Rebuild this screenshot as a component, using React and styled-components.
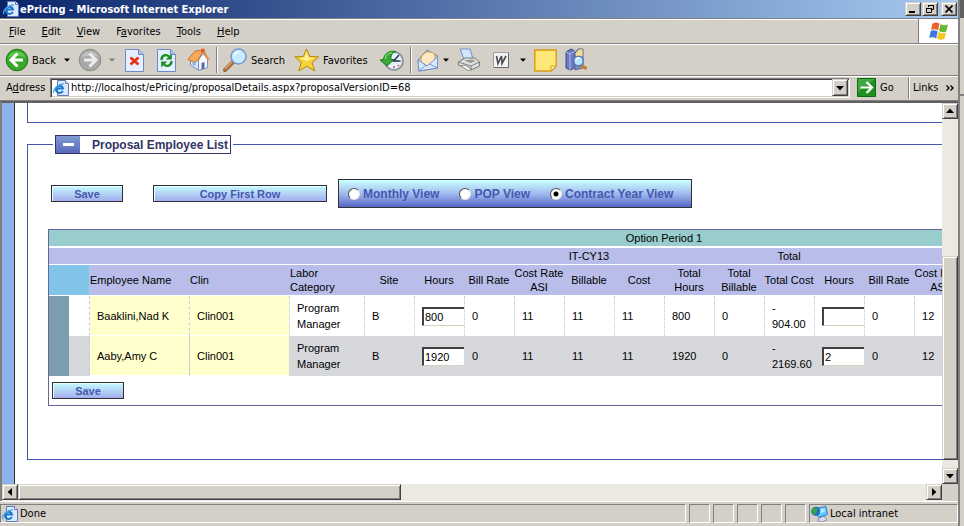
import React, { useState } from 'react'
import styled, { createGlobalStyle, css } from 'styled-components'

const GlobalStyle = createGlobalStyle`
    * { box-sizing: border-box; }
    body {
        margin: 0;
        background: #d4d0c8;
        font-family: "DejaVu Sans Condensed", "Open Sans", sans-serif;
        font-size: 11px;
        color: #000;
    }
    button, input { font: inherit; color: inherit; }
`

const raised = css`
    border: 1px solid;
    border-color: #d4d0c8 #404040 #404040 #d4d0c8;
    box-shadow: inset 1px 1px 0 #fff, inset -1px -1px 0 #808080;
    background: #d4d0c8;
`

/* ---------- window ---------- */

const Desktop = styled.div`
    display: flex;
    height: 100vh;
    overflow: hidden;
`
const Window = styled.div`
    flex: 1;
    min-width: 0;
    display: flex;
    flex-direction: column;
`
const Edge = styled.div`
    width: 6px;
    border-left: 2px solid #808080;
    background: linear-gradient(#606060 18px, #d4d0c8 18px, #d4d0c8 94px, #808080 94px, #808080 96px, #d4d0c8 96px);
`
const TitleBar = styled.header`
    height: 18px;
    padding: 0 1px 0 3px;
    display: flex;
    align-items: center;
    gap: 1px;
    background: linear-gradient(to right, #0a246a, #a6caf0);
    color: #fff;
`
const Title = styled.h1`
    flex: 1;
    margin: 0;
    font-size: 11px;
    font-weight: bold;
    white-space: nowrap;
`
const CaptionButton = styled.button`
    ${raised}
    width: 16px;
    height: 14px;
    padding: 0;
    display: flex;
    justify-content: center;
    align-items: center;
    margin-left: ${p => (p.$apart ? '2px' : '0')};
`
const MenuRow = styled.div`
    height: 26px;
    display: flex;
    border-top: 1px solid #808080;
    border-bottom: 1px solid #808080;
    box-shadow: inset 0 1px 0 #fff;
`
const Menu = styled.nav`
    flex: 1;
    display: flex;
    align-items: center;
    gap: 16px;
    padding-left: 9px;
    box-shadow: inset 0 1px 0 #fff;
`
const MenuItem = styled.button`
    border: 0;
    padding: 0;
    background: none;
`
const Flag = styled.div`
    width: 40px;
    border-left: 1px solid #808080;
    background: #fff;
    display: flex;
    align-items: center;
    justify-content: center;
`
const ToolRow = styled.div`
    height: 32px;
    display: flex;
    align-items: center;
    padding-left: 5px;
    border-top: 1px solid #fff;
    border-bottom: 1px solid #808080;
`
const Tool = styled.button`
    width: ${p => p.$width}px;
    height: 26px;
    border: 0;
    padding: 0;
    background: none;
    display: flex;
    align-items: center;
    gap: 3px;
    white-space: nowrap;
    svg { flex: none; }
`
const Divider = styled.span`
    width: 2px;
    height: 26px;
    margin-right: 5px;
    border-left: 1px solid #808080;
    border-right: 1px solid #fff;
`
const AddressRow = styled.div`
    height: 25px;
    padding: 1px 2px 3px 6px;
    display: flex;
    align-items: center;
    border-top: 1px solid #fff;
    border-bottom: 1px solid #808080;
`
const AddressLabel = styled.label`
    width: 44px;
    white-space: nowrap;
`
const Combo = styled.div`
    flex: 1;
    height: 20px;
    display: flex;
    align-items: center;
    padding: 0 0 0 2px;
    border: 1px solid;
    border-color: #808080 #fff #fff #808080;
    box-shadow: inset 1px 1px 0 #404040, inset -1px -1px 0 #d4d0c8;
    background: #fff;
`
const AddressInput = styled.input`
    flex: 1;
    min-width: 0;
    border: 0;
    outline: 0;
    padding: 0 0 0 2px;
    background: none;
`
const DropButton = styled.button`
    ${raised}
    width: 16px;
    height: 17px;
    padding: 0;
    margin-right: 1px;
    display: flex;
    align-items: center;
    justify-content: center;
`
const Go = styled(Tool)`
    height: 20px;
    margin-left: 7px;
    gap: 4px;
`
const Links = styled.button`
    width: 48px;
    height: 22px;
    padding: 0 2px 0 4px;
    border: 0;
    border-left: 1px solid #808080;
    box-shadow: inset 1px 0 0 #fff;
    background: none;
    display: flex;
    align-items: center;
    justify-content: space-between;
`

/* ---------- scrolling area ---------- */

const View = styled.div`
    flex: 1;
    min-height: 0;
    display: grid;
    grid-template: minmax(0, 1fr) 17px / minmax(0, 1fr) 16px;
    border: solid #404040;
    border-width: 2px 0 0 2px;
    border-color: #606060 #404040 #404040 #808080;
`
const Page = styled.main`
    overflow: hidden;
    display: flex;
    background: #fff;
    font-family: "Liberation Sans", Arial, sans-serif;
`
const Side = styled.div`
    width: 13px;
    flex: none;
    background: #8cb4e8;
    border-right: 1px solid #303030;
`
const Content = styled.div`
    flex: 1;
    min-width: 0;
    margin-left: 12px;
`
const PrevSection = styled.div`
    height: 20px;
    border: solid #4058b0;
    border-width: 0 0 1px 1px;
`
const Section = styled.fieldset`
    margin: 12px 0 0;
    padding: 25px 0 53px 20px;
    min-width: 0;
    border: solid #4058b0;
    border-width: 1px 0 1px 1px;
`
const Legend = styled.legend`
    margin-left: 5px;
    padding: 0 2px;
`
const LegendBox = styled.div`
    height: 19px;
    display: flex;
    align-items: center;
    border: 1px solid #333366;
    font-size: 12px;
    font-weight: bold;
    color: #333366;
    padding-right: 2px;
`
const Collapse = styled.button`
    width: 24px;
    height: 17px;
    margin-right: 12px;
    padding: 0;
    border: 0;
    background: linear-gradient(#7f9cd4, #5868b8);
    display: flex;
    justify-content: center;
    align-items: center;
    &::before {
        content: '';
        width: 11px;
        height: 3px;
        background: #fff;
    }
`
const Actions = styled.div`
    display: flex;
    align-items: center;
    padding-left: 3px;
    margin-bottom: 21px;
`
const ActionButton = styled.button`
    width: ${p => (p.$wide ? '174px' : '72px')};
    height: 17px;
    padding: 0;
    border: 1px solid #303030;
    box-shadow: inset 1px 1px 0 #e8ffff;
    background: linear-gradient(#c4fbff, #a4acec);
    color: #4458b0;
    font-weight: bold;
    line-height: 14px;
    margin-right: ${p => (p.$wide ? '11px' : '30px')};
`
const ViewPicker = styled.div`
    width: 354px;
    height: 29px;
    display: flex;
    align-items: center;
    gap: 20px;
    padding-left: 9px;
    border: 1px solid #303030;
    background: linear-gradient(#ccffff, #9cb4ec 55%, #5464c4);
`
const ViewOption = styled.label`
    display: flex;
    align-items: center;
    gap: 3px;
    font-size: 12px;
    font-weight: bold;
    color: #4458b0;
    white-space: nowrap;
`
const Radio = styled.input`
    appearance: none;
    width: 12px;
    height: 12px;
    margin: 0;
    border: 1px solid;
    border-color: #505050 #e4e4e4 #e4e4e4 #505050;
    border-radius: 50%;
    background: #fff;
    &:checked { background: radial-gradient(circle, #000 2px, #fff 3px); }
`

/* ---------- grid ---------- */

const GridBox = styled.div`
    width: 1200px;
    border: 1px solid #666699;
    padding-bottom: 6px;
`
const Grid = styled.table`
    table-layout: fixed;
    width: 915px;
    border-collapse: separate;
    border-spacing: 0;
    margin-bottom: 6px;
`
const Band = styled.tr`
    height: ${p => p.$height}px;
    background: ${p => p.$color};
`
const Th = styled.th`
    padding: 0;
    border-bottom: ${p => p.$line || 1}px solid #fff;
    font-weight: normal;
    line-height: 14px;
    text-align: ${p => (p.$left ? 'left' : 'center')};
    padding-left: ${p => (p.$left ? '1px' : '0')};
    background: ${p => p.$bg || 'transparent'};
    white-space: ${p => (p.$wrap ? 'normal' : 'nowrap')};
`
const Row = styled.tr`
    height: 40px;
    background: ${p => (p.$alt ? '#d6d8dc' : '#fff')};
    --line: ${p => (p.$alt ? '#d6d8dc' : '#c0c0c8')};
`
const Td = styled.td`
    padding: 0 7px;
    line-height: 16px;
    border-left: 1px ${p => (p.$key ? 'dashed #c0c8f0' : 'dotted var(--line)')};
    border-bottom: ${p => (p.$key ? '1px solid #fff' : '0')};
    background: ${p => (p.$key ? '#ffffcc' : 'transparent')};
    background-clip: padding-box;
`
const Marker = styled.td`
    padding: 0;
    background: ${p => (p.$dark ? '#7c9cb0' : 'transparent')};
`
const HoursInput = styled.input`
    display: block;
    width: 42px;
    height: 19px;
    padding: 0 0 0 1px;
    border: solid;
    border-width: 2px 0 1px 2px;
    border-color: #404040 #404040 #d8d0b8 #404040;
    border-radius: 0;
    background: #fff;
`
const Foot = styled.div`
    padding-left: 3px;
    display: flex;
`

/* ---------- scroll bars and status ---------- */

const Bar = styled.div`
    display: flex;
    flex-direction: ${p => (p.$vertical ? 'column' : 'row')};
    background: #ece9e2;
`
const ArrowButton = styled.button`
    ${raised}
    width: 16px;
    height: 16px;
    flex: none;
    padding: 0;
    display: flex;
    align-items: center;
    justify-content: center;
`
const Thumb = styled.div`
    ${raised}
    flex: ${p => p.$size};
    height: ${p => (p.$across ? '16px' : 'auto')};
`
const Track = styled.div`
    flex: ${p => p.$size};
`
const StatusBar = styled.footer`
    height: 25px;
    padding: 2px 0 3px;
    display: flex;
    gap: 3px;
    border-top: 1px solid #fff;
`
const Pane = styled.div`
    width: ${p => (p.$width ? p.$width + 'px' : 'auto')};
    flex: ${p => (p.$width ? 'none' : 1)};
    display: flex;
    align-items: center;
    gap: 2px;
    padding-left: 1px;
    border: 1px solid;
    border-color: #808080 #fff #fff #808080;
`

/* ---------- icons ---------- */

const Arrow = ({ dir = 'down', color = '#000', size = 6 }) => {
    const turn = { down: 0, left: 90, up: 180, right: 270 }[dir]
    return (
        <svg width={size} height={size} viewBox="0 0 6 6">
            <path d="M0 1.5h6L3 4.8z" fill={color} transform={`rotate(${turn} 3 3)`} />
        </svg>
    )
}

const PageIcon = () => (
    <svg width="16" height="16" viewBox="0 0 16 16">
        <path d="M4.500 .5h8l3 3v12h-11z" fill="#dce8fc" stroke="#6078b8" />
        <path d="M12.500 .5v3h3" fill="#fff" stroke="#6078b8" />
        <path d="M9.800 10.800A3.600 3.600 0 1 1 10 8.500H3" fill="none" stroke="#1878d0" strokeWidth="2" />
        <path d="M.8 13C-.8 10 5 3.500 11 3.800" fill="none" stroke="#48a8f0" strokeWidth="1.300" />
    </svg>
)

const BackIcon = () => (
    <svg width="24" height="24" viewBox="0 0 24 24">
        <circle cx="12" cy="12" r="10.800" fill="#38a828" stroke="#187818" />
        <path d="M3 10a9.500 9.500 0 0 1 18 0c-5-3-12-3-18 0z" fill="#78d060" opacity=".7" />
        <path d="M12.500 5.500L6 12l6.500 6.500M6.500 12H18" fill="none" stroke="#fff" strokeWidth="3" />
    </svg>
)

const ForwardIcon = () => (
    <svg width="24" height="24" viewBox="0 0 24 24">
        <circle cx="12" cy="12" r="10.800" fill="#a8a8a8" stroke="#888" />
        <path d="M3 10a9.500 9.500 0 0 1 18 0c-5-3-12-3-18 0z" fill="#c0c0c0" />
        <path d="M11.500 5.500L18 12l-6.500 6.500M17.500 12H6" fill="none" stroke="#ececec" strokeWidth="3" />
    </svg>
)

const Sheet = () => (
    <>
        <path d="M.5 .5h13l5 5v17H.5z" fill="#e4f0ff" stroke="#7088c8" />
        <path d="M13.500 .5v5h5" fill="#a8c4f0" stroke="#7088c8" />
    </>
)

const StopIcon = () => (
    <svg width="19" height="23" viewBox="0 0 19 23">
        <Sheet />
        <path d="M5.500 8.500l8 7M13.500 8.500l-8 7" stroke="#e83010" strokeWidth="2.800" />
    </svg>
)

const RefreshIcon = () => (
    <svg width="19" height="23" viewBox="0 0 19 23">
        <Sheet />
        <path d="M4.500 11c0-5 5-6 7.500-3.500M14.500 12c0 5-5 6-7.500 3.500" fill="none" stroke="#18901c" strokeWidth="2.400" />
        <path d="M14.800 4.500v6h-6zM4.200 18.500v-6h6z" fill="#18901c" />
    </svg>
)

const HomeIcon = () => (
    <svg width="23" height="24" viewBox="0 0 23 24">
        <path d="M3.500 11L9 5l2.500 6.500V22l-8-5z" fill="#dce6fc" stroke="#7890c8" />
        <path d="M11.500 12L16 5.500l4.500 5.500v8.500l-9 3z" fill="#f8f8ff" stroke="#7890c8" />
        <path d="M.8 11.500L8 3l9-1-6.500 10.500-2.500 2z" fill="#f4a858" stroke="#c87830" />
        <path d="M17 2l5.500 9.500-2 .5-4-6.500z" fill="#e89040" />
        <path d="M14 .8h3.500V5L14 4z" fill="#e85828" />
        <path d="M14.500 15l3-1v6.500l-3 1z" fill="#5868a0" />
        <path d="M5.500 13.500l3 1v3.500l-3-1.500z" fill="#80b0e8" />
    </svg>
)

const SearchIcon = () => (
    <svg width="25" height="24" viewBox="0 0 25 24">
        <path d="M10 14l-8 8" stroke="#a06838" strokeWidth="4" strokeLinecap="round" />
        <path d="M9 14l-7 7" stroke="#e0a868" strokeWidth="1.500" />
        <circle cx="15.500" cy="8.500" r="7.500" fill="#c8ecff" stroke="#7898d0" strokeWidth="1.600" />
        <path d="M10.500 8c.5-4 4-5 7-4-3 0-4 2-7 4z" fill="#fff" />
    </svg>
)

const StarIcon = () => (
    <svg width="26" height="24" viewBox="0 0 26 24">
        <path d="M12.500 1l3.300 7.500 9 .3-6.800 5.700 2.800 8.500-8-4.800-8 4.800 2.500-8.500L.8 8.800l8.500-.3z" fill="#f8d038" stroke="#b88810" />
        <path d="M12.500 3.500l2 6 6 .5-8 3-7-3 5-.5z" fill="#fff498" />
    </svg>
)

const HistoryIcon = () => (
    <svg width="25" height="24" viewBox="0 0 25 24">
        <circle cx="14" cy="13" r="9" fill="#e4f2fc" stroke="#8898a0" strokeWidth="2" />
        <path d="M21 13h-2M14 20v-2M19 18l-1-1" stroke="#e05040" strokeWidth="1.500" />
        <path d="M19 7l-5.500 6h6" fill="none" stroke="#203050" strokeWidth="1.400" />
        <path d="M0 12l3.500-.5C4 6 9 2 16 3.500 12 4.500 10.500 8 11 11.500h3L7 18z" fill="#38a838" stroke="#187820" />
        <path d="M5 11c.5-4 3-6 7-6.500" fill="none" stroke="#90e080" strokeWidth="1.200" />
    </svg>
)

const MailIcon = () => (
    <svg width="22" height="24" viewBox="0 0 22 24">
        <path d="M1 12L10 2l10.500 6v12L2 23z" fill="#b8d0f8" stroke="#6880c0" />
        <path d="M4 10c2-7 11-8 14-3v6l-8 5-6-4z" fill="#ffe8c0" stroke="#d09848" />
        <path d="M1 12l9 6 10.500-9v11L2 23z" fill="#d4eaff" stroke="#7890c8" />
        <path d="M2 23l7-6M20.500 20l-8-4" stroke="#7890c8" fill="none" />
    </svg>
)

const PrintIcon = () => (
    <svg width="24" height="24" viewBox="0 0 24 24">
        <path d="M3 1h10l3 10H7z" fill="#d0e8ff" stroke="#7090c8" />
        <path d="M1.500 14L8 10h10l4.500 4v4l-8.500 4-12.500-5z" fill="#e0e0e0" stroke="#787878" />
        <path d="M1.500 14L14 18l8.500-4M14 18v4" fill="none" stroke="#808080" />
        <path d="M7 12.500l8-1 3.500 1.500-5 2z" fill="#989898" />
        <path d="M4 18l7 4.500 4-1.500-8-4z" fill="#fff" stroke="#888" />
    </svg>
)

const WordIcon = () => (
    <svg width="16" height="16" viewBox="0 0 16 16">
        <path d="M.5 .5h15v15H.5z" fill="#f4f4f4" stroke="#a0a0a0" />
        <path d="M15.500 1v14.500H1" fill="none" stroke="#686868" />
        <path d="M3.500 4l1.500 7.500L8.500 4l.5 7.500L13 4" fill="none" stroke="#505050" strokeWidth="1.700" />
    </svg>
)

const NoteIcon = () => (
    <svg width="23" height="23" viewBox="0 0 23 23">
        <path d="M.8 1h21.400v16l-5 5H.8z" fill="#ffe878" stroke="#d89c10" strokeWidth="1.400" />
        <path d="M22 17h-5v5z" fill="#fff4b8" stroke="#d89c10" />
    </svg>
)

const ResearchIcon = () => (
    <svg width="23" height="24" viewBox="0 0 23 24">
        <path d="M1 4l5-3 4 2v17l-5 2-4-2z" fill="#6c78c0" stroke="#404c90" />
        <path d="M1 4l4 2v16M5 6l5-3" fill="none" stroke="#b0c0f0" />
        <path d="M10 5l3-4h5v19l-8 2z" fill="#8890a8" stroke="#606c90" />
        <path d="M10.500 5.500L14 1.500h3.500V8l-6 3z" fill="#f4dc90" />
        <path d="M16.500 17l5 4" stroke="#c08030" strokeWidth="3" />
        <circle cx="13.500" cy="13" r="4.800" fill="#b8e4ff" stroke="#5878b8" strokeWidth="1.500" />
        <path d="M11 12c.5-2 2-2.500 3.500-2" fill="none" stroke="#fff" strokeWidth="1.500" />
    </svg>
)

const GoIcon = () => (
    <svg width="19" height="19" viewBox="0 0 19 19">
        <path d="M.5 .5h18v18H.5z" fill="#209020" stroke="#106810" />
        <path d="M1 1h17L1 14z" fill="#58b858" opacity=".6" />
        <path d="M9.500 4l5.500 5.500L9.500 15M3.500 9.500H14" fill="none" stroke="#fff" strokeWidth="2.200" />
    </svg>
)

const FlagIcon = () => (
    <svg width="20" height="18" viewBox="0 0 20 18">
        <path d="M3.500 1.500C6 0 8 0 10.500 1.500L9 8.500C6.500 7 4.500 7 2 8z" fill="#f06030" />
        <path d="M11.500 2c2.500 1.500 5 1.500 7.500.5l-1.700 7C15 10.500 12.500 10.500 10 9z" fill="#68b830" />
        <path d="M1.700 9c2.500-1 4.500-1 7 .5l-1.500 7C5 15 2.500 15 .2 16z" fill="#3c78e0" />
        <path d="M9.700 10c2.500 1.500 5 1.500 7.300.5l-1.600 6.500c-2.400 1-5 1-7.400-.5z" fill="#f8c820" />
    </svg>
)

const IntranetIcon = () => (
    <svg width="17" height="16" viewBox="0 0 17 16">
        <path d="M8 12l5-2 3 4-5 2-4-1z" fill="#dcdcf0" stroke="#8888a8" />
        <path d="M6 2l9-1.500 1.500 8L8 11.500 5 8z" fill="#60c8ff" stroke="#3080c8" />
        <path d="M8 3.500l5.500-1 .5 3-5 2z" fill="#b8ecff" />
        <circle cx="4.800" cy="5.300" r="4.600" fill="#2070c8" />
        <path d="M1.500 2.500C4.500 .5 7 2 6 4.500s-1 4-2.500 4S.5 4.500 1.500 2.500z" fill="#38a838" />
    </svg>
)

/* ---------- data ---------- */

const menus = [['', 'F', 'ile'], ['', 'E', 'dit'], ['', 'V', 'iew'], ['F', 'a', 'vorites'], ['', 'T', 'ools'], ['', 'H', 'elp']]

const tools = [
    { name: 'Back', icon: <BackIcon />, text: 'Back', width: 59 },
    { name: 'Back list', icon: <Arrow />, width: 14 },
    { name: 'Forward', icon: <ForwardIcon />, width: 31 },
    { name: 'Forward list', icon: <Arrow color="#808080" />, width: 16 },
    { name: 'Stop', icon: <StopIcon />, width: 32 },
    { name: 'Refresh', icon: <RefreshIcon />, width: 30 },
    { name: 'Home', icon: <HomeIcon />, width: 29, end: true },
    { name: 'Search', icon: <SearchIcon />, text: 'Search', width: 71 },
    { name: 'Favorites', icon: <StarIcon />, text: 'Favorites', width: 86 },
    { name: 'History', icon: <HistoryIcon />, width: 30, end: true },
    { name: 'Mail', icon: <MailIcon />, width: 26 },
    { name: 'Mail list', icon: <Arrow />, width: 14 },
    { name: 'Print', icon: <PrintIcon />, width: 36 },
    { name: 'Edit with Word', icon: <WordIcon />, width: 27 },
    { name: 'Edit list', icon: <Arrow />, width: 14 },
    { name: 'Discuss', icon: <NoteIcon />, width: 31 },
    { name: 'Research', icon: <ResearchIcon />, width: 30 },
]

const views = ['Monthly View', 'POP View', 'Contract Year View']
const widths = [20, 20, 100, 100, 75, 50, 50, 50, 50, 50, 50, 50, 50, 50, 50, 50, 50]
const columns = ['Site', 'Hours', 'Bill Rate', 'Cost Rate ASI', 'Billable', 'Cost', 'Total Hours', 'Total Billable', 'Total Cost', 'Hours', 'Bill Rate', 'Cost Rate ASI']

const employees = [
    { name: 'Baaklini,Nad K', hours: '800', values: ['0', '11', '11', '11', '800', '0', '- 904.00'], next: '', rest: ['0', '12'] },
    { name: 'Aaby,Amy C', hours: '1920', values: ['0', '11', '11', '11', '1920', '0', '- 2169.60'], next: '2', rest: ['0', '12'] },
]

const EmployeeRow = ({ item, alt }) => (
    <Row $alt={alt}>
        <Marker $dark />
        <Marker />
        <Td $key>{item.name}</Td>
        <Td $key>Clin001</Td>
        <Td>Program Manager</Td>
        <Td>B</Td>
        <Td><HoursInput aria-label="Hours" defaultValue={item.hours} /></Td>
        {item.values.map((value, i) => <Td key={i}>{value}</Td>)}
        <Td><HoursInput aria-label="Hours" defaultValue={item.next} /></Td>
        {item.rest.map((value, i) => <Td key={i}>{value}</Td>)}
    </Row>
)

const EmployeeGrid = () => (
    <GridBox>
        <Grid>
            <colgroup>
                {widths.map((w, i) => <col key={i} width={w} />)}
            </colgroup>
            <thead>
                <Band $height={18} $color="#99cccc">
                    <Th colSpan={6} $line={2} />
                    <Th colSpan={10} $line={2}>Option Period 1</Th>
                    <Th $line={2} />
                </Band>
                <Band $height={17} $color="#b8bee9">
                    <Th colSpan={6} />
                    <Th colSpan={7}>IT-CY13</Th>
                    <Th>Total</Th>
                    <Th colSpan={3} />
                </Band>
                <Band $height={31} $color="#b8bee9">
                    <Th colSpan={2} $bg="#80c4e8" />
                    <Th $left>Employee Name</Th>
                    <Th $left>Clin</Th>
                    <Th $left $wrap>Labor<br />Category</Th>
                    {columns.map((name, i) => (
                        <Th key={i} $wrap={name.length > 10}>
                            {name === 'Cost Rate ASI' ? <>Cost Rate<br />ASI</> : name}
                        </Th>
                    ))}
                </Band>
            </thead>
            <tbody>
                {employees.map((item, i) => <EmployeeRow key={item.name} item={item} alt={i % 2 === 1} />)}
            </tbody>
        </Grid>
        <Foot>
            <ActionButton>Save</ActionButton>
        </Foot>
    </GridBox>
)

const App = () => {
    const [view, setView] = useState(views[2])
    return (
        <Desktop>
            <GlobalStyle />
            <Window>
                <TitleBar>
                    <PageIcon />
                    <Title>ePricing - Microsoft Internet Explorer</Title>
                    <CaptionButton aria-label="Minimize">
                        <svg width="10" height="8"><path d="M1 6h6v2H1z" /></svg>
                    </CaptionButton>
                    <CaptionButton aria-label="Restore">
                        <svg width="10" height="10"><path d="M3.500 3V1.500h5v4H7M3 1.500h6M1.500 4.500h5v4h-5zM1 4.500h6" fill="none" stroke="#000" /></svg>
                    </CaptionButton>
                    <CaptionButton aria-label="Close" $apart>
                        <svg width="8" height="8"><path d="M.5 .5l7 7M7.500 .5l-7 7" stroke="#000" strokeWidth="1.600" /></svg>
                    </CaptionButton>
                </TitleBar>
                <MenuRow>
                    <Menu>
                        {menus.map(([pre, key, post]) => (
                            <MenuItem key={post}>{pre}<u>{key}</u>{post}</MenuItem>
                        ))}
                    </Menu>
                    <Flag><FlagIcon /></Flag>
                </MenuRow>
                <ToolRow>
                    {tools.map(tool => (
                        <React.Fragment key={tool.name}>
                            <Tool $width={tool.width} aria-label={tool.name}>{tool.icon}{tool.text}</Tool>
                            {tool.end && <Divider />}
                        </React.Fragment>
                    ))}
                </ToolRow>
                <AddressRow>
                    <AddressLabel htmlFor="address">A<u>d</u>dress</AddressLabel>
                    <Combo>
                        <PageIcon />
                        <AddressInput id="address" defaultValue="http://localhost/ePricing/proposalDetails.aspx?proposalVersionID=68" />
                        <DropButton aria-label="Show addresses"><Arrow size={8} /></DropButton>
                    </Combo>
                    <Go $width={51}><GoIcon />Go</Go>
                    <Links>
                        Links
                        <svg width="8" height="6"><path d="M.5 .5L3 3 .5 5.500M4.500 .5L7 3 4.500 5.500" fill="none" stroke="#000" strokeWidth="1.400" /></svg>
                    </Links>
                </AddressRow>
                <View>
                    <Page>
                        <Side />
                        <Content>
                            <PrevSection />
                            <Section>
                                <Legend>
                                    <LegendBox>
                                        <Collapse aria-label="Collapse" />
                                        Proposal Employee List
                                    </LegendBox>
                                </Legend>
                                <Actions>
                                    <ActionButton>Save</ActionButton>
                                    <ActionButton $wide>Copy First Row</ActionButton>
                                    <ViewPicker>
                                        {views.map(name => (
                                            <ViewOption key={name}>
                                                <Radio type="radio" name="view" checked={view === name} onChange={() => setView(name)} />
                                                {name}
                                            </ViewOption>
                                        ))}
                                    </ViewPicker>
                                </Actions>
                                <EmployeeGrid />
                            </Section>
                        </Content>
                    </Page>
                    <Bar $vertical>
                        <ArrowButton aria-label="Scroll up"><Arrow dir="up" size={8} /></ArrowButton>
                        <Track $size={138} />
                        <Thumb $size={203} />
                        <Track $size={8} />
                        <ArrowButton aria-label="Scroll down"><Arrow size={8} /></ArrowButton>
                    </Bar>
                    <Bar>
                        <ArrowButton aria-label="Scroll left"><Arrow dir="left" size={8} /></ArrowButton>
                        <Thumb $size={382} $across />
                        <Track $size={526} />
                        <ArrowButton aria-label="Scroll right"><Arrow dir="right" size={8} /></ArrowButton>
                    </Bar>
                </View>
                <StatusBar>
                    <Pane><PageIcon />Done</Pane>
                    {[1, 2, 3, 4, 5].map(n => <Pane key={n} $width={21} />)}
                    <Pane $width={149}><IntranetIcon />Local intranet</Pane>
                </StatusBar>
            </Window>
            <Edge />
        </Desktop>
    )
}

export default App
